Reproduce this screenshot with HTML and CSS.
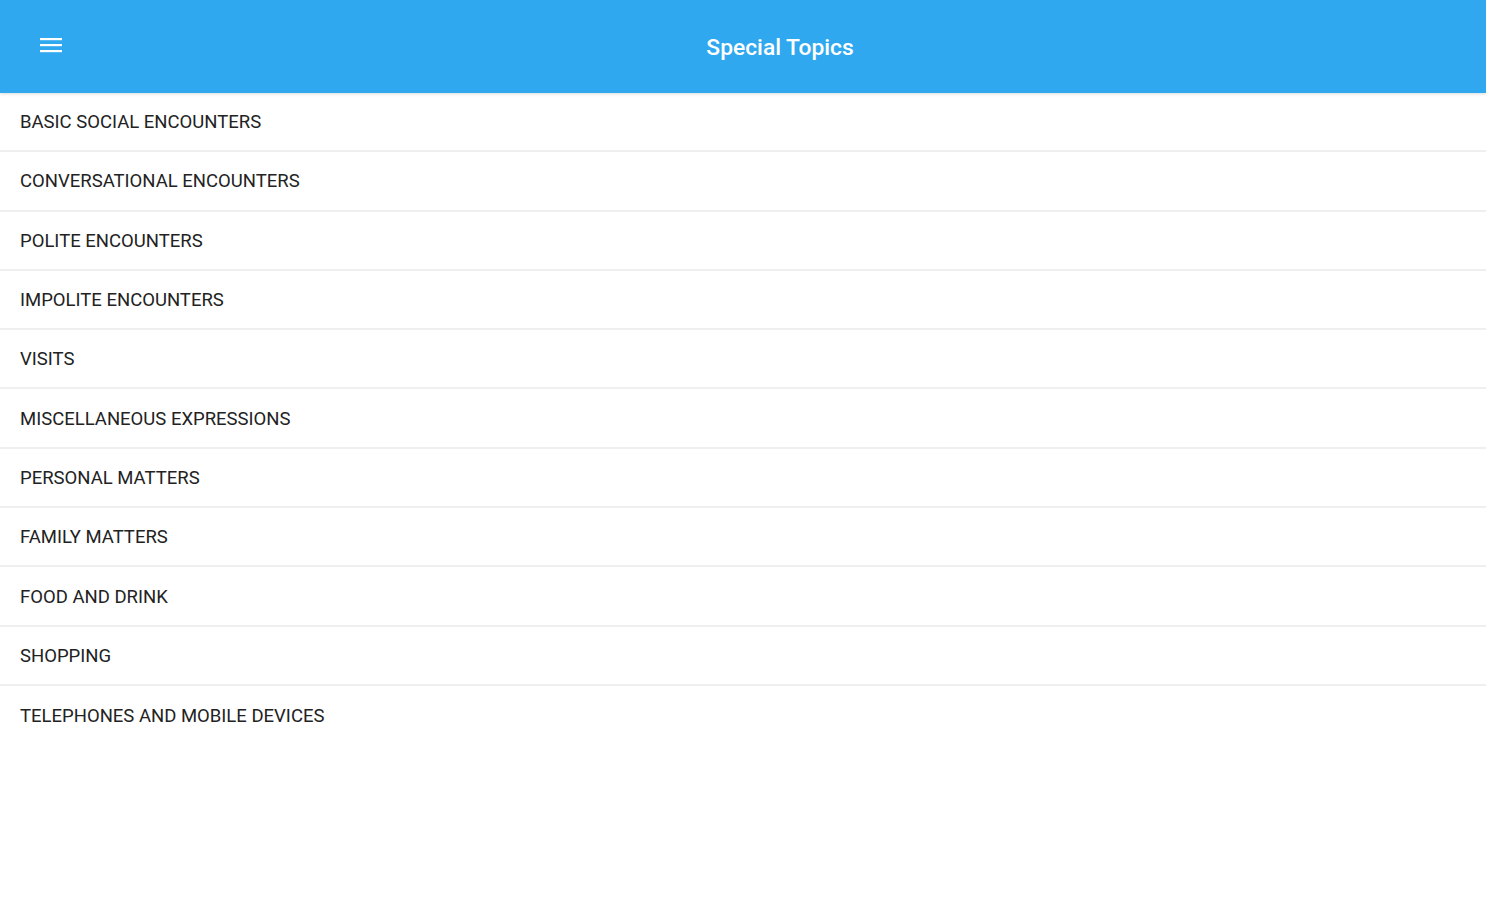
FILE: index.html
```html
<!DOCTYPE html>
<html>
<head>
<meta charset="utf-8">
<link rel="stylesheet" href="styles.css">
</head>
<body>
<header class="toolbar">
  <button class="menu-btn" aria-label="Menu">
    <svg width="22" height="16" viewBox="0 0 22 16"><rect x="0" y="1" width="22" height="2.2" fill="#fff"/><rect x="0" y="7" width="22" height="2.2" fill="#fff"/><rect x="0" y="13" width="22" height="2.2" fill="#fff"/></svg>
  </button>
  <h1 class="title">Special Topics</h1>
</header>
<ul class="list">
  <li class="item">BASIC SOCIAL ENCOUNTERS</li>
  <li class="item">CONVERSATIONAL ENCOUNTERS</li>
  <li class="item">POLITE ENCOUNTERS</li>
  <li class="item">IMPOLITE ENCOUNTERS</li>
  <li class="item">VISITS</li>
  <li class="item">MISCELLANEOUS EXPRESSIONS</li>
  <li class="item">PERSONAL MATTERS</li>
  <li class="item">FAMILY MATTERS</li>
  <li class="item">FOOD AND DRINK</li>
  <li class="item">SHOPPING</li>
  <li class="item last">TELEPHONES AND MOBILE DEVICES</li>
</ul>
</body>
</html>
```
FILE: styles.css
```css
html, body {
  margin: 0;
  padding: 0;
  background: #fff;
  font-family: Roboto, "Liberation Sans", sans-serif;
}
.toolbar {
  height: 93px;
  background: #2fa8f0;
  display: flex;
  align-items: center;
  box-shadow: 0 1px 3px rgba(0,0,0,0.15);
  position: relative;
  z-index: 1;
}
.menu-btn {
  background: none;
  border: 0;
  padding: 0;
  margin-left: 40px;
  margin-top: -3px;
  width: 22px;
  height: 16px;
  display: flex;
}
.title {
  margin: 2px 0 0;
  flex: 1;
  text-align: center;
  padding-left: 12px;
  color: #fff;
  font-size: 22.8px;
  font-weight: 500;
}
.list {
  list-style: none;
  margin: 0;
  padding: 0;
}
.item {
  box-sizing: border-box;
  height: 59.3px;
  padding-left: 20px;
  padding-top: 1px;
  display: flex;
  align-items: center;
  font-size: 18.5px;
  color: #222;
  border-bottom: 2px solid #efefef;
}
.item.last {
  border-bottom: 0;
}
```
